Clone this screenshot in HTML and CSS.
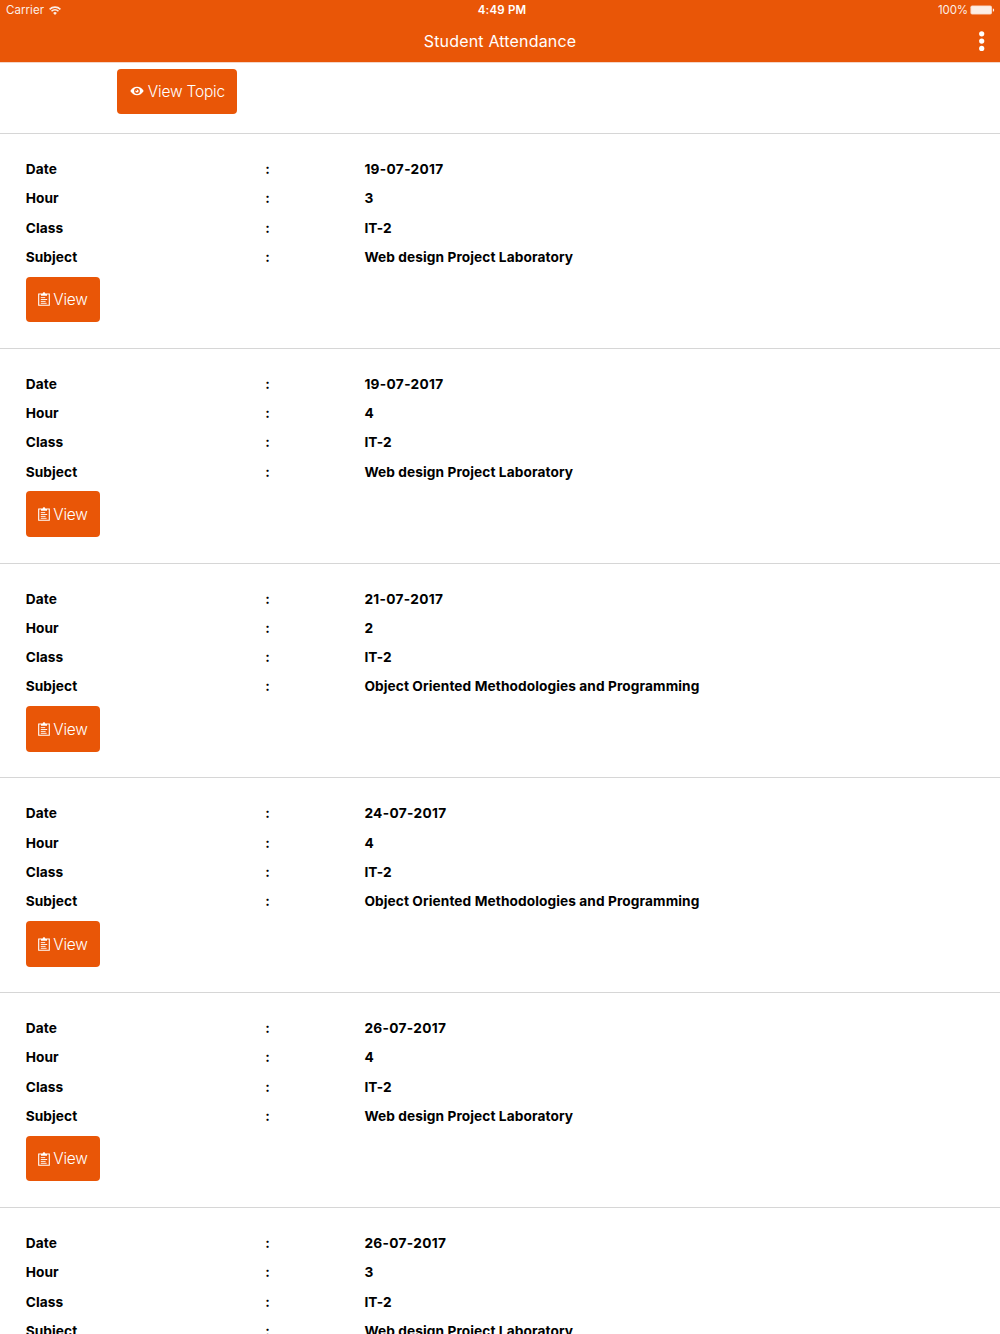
FILE: index.html
```html
<!DOCTYPE html>
<html lang="en">
<head>
<meta charset="utf-8">
<title>Student Attendance</title>
<link rel="stylesheet" href="styles.css">
</head>
<body>
<svg class="defs" aria-hidden="true">
  <symbol id="clipboard" viewBox="0 0 12 14">
    <path d="M3 2H.7v11.300h10.600V2H9" fill="none" stroke="currentColor" stroke-width="1.100"/>
    <path d="M3 3.800V1.600h1.700a1.300 1.300 0 0 1 2.600 0H9v2.200z" fill="currentColor"/>
    <path d="M2.800 5.600h4.400M2.800 7.500h6.400M2.800 9.400h4.800M2.800 11.300h5.800" fill="none" stroke="currentColor" stroke-width=".9"/>
  </symbol>
</svg>
<header class="header">
  <div class="status">
    <div class="carrier">Carrier
      <svg class="wifi" viewBox="0 0 12 9"><path d="M.6 3.300a7.800 7.800 0 0 1 10.800 0M2.500 5.300a5 5 0 0 1 7 0" fill="none" stroke="#fff" stroke-width="1.600"/><path d="M6 8.900 4.100 6.900a2.800 2.800 0 0 1 3.800 0z" fill="#fff"/></svg>
    </div>
    <div class="time">4:49 PM</div>
    <div class="power">100%
      <svg class="battery" viewBox="0 0 25 10"><rect x=".4" y=".4" width="21.600" height="9.200" rx="1.800" fill="#fff" fill-opacity=".8"/><rect x="1.300" y="1.300" width="19.800" height="7.400" rx="1" fill="#fff"/><path d="M22.800 3.200q1.400.4 1.400 1.800t-1.400 1.800z" fill="#fff"/></svg>
    </div>
  </div>
  <div class="navbar">
    <h1 class="title">Student Attendance</h1>
    <svg class="more" viewBox="0 0 6 20"><circle cx="2.700" cy="2.800" r="2.600"/><circle cx="2.700" cy="10.100" r="2.600"/><circle cx="2.700" cy="17.400" r="2.600"/></svg>
  </div>
</header>
<main>
  <div class="toolbar">
    <button class="button topic"><svg class="eye" viewBox="0 0 14 10"><path d="M.3 5Q3 .8 7 .8T13.700 5Q11 9.200 7 9.200T.3 5z" fill="#fff"/><circle cx="7" cy="5" r="2.900" fill="#e95607"/><circle cx="7" cy="5" r="1.600" fill="#fff"/><circle cx="6.300" cy="4.300" r=".8" fill="#e95607"/></svg><span>View Topic</span></button>
  </div>
  <section class="record">
    <dl class="fields">
      <dt>Date</dt><dd>:</dd><dd class="date">19-07-2017</dd>
      <dt>Hour</dt><dd>:</dd><dd>3</dd>
      <dt>Class</dt><dd>:</dd><dd>IT-2</dd>
      <dt>Subject</dt><dd>:</dd><dd>Web design Project Laboratory</dd>
    </dl>
    <button class="button view"><svg class="clip"><use href="#clipboard"/></svg><span>View</span></button>
  </section>
  <section class="record">
    <dl class="fields">
      <dt>Date</dt><dd>:</dd><dd class="date">19-07-2017</dd>
      <dt>Hour</dt><dd>:</dd><dd>4</dd>
      <dt>Class</dt><dd>:</dd><dd>IT-2</dd>
      <dt>Subject</dt><dd>:</dd><dd>Web design Project Laboratory</dd>
    </dl>
    <button class="button view"><svg class="clip"><use href="#clipboard"/></svg><span>View</span></button>
  </section>
  <section class="record">
    <dl class="fields">
      <dt>Date</dt><dd>:</dd><dd class="date">21-07-2017</dd>
      <dt>Hour</dt><dd>:</dd><dd>2</dd>
      <dt>Class</dt><dd>:</dd><dd>IT-2</dd>
      <dt>Subject</dt><dd>:</dd><dd>Object Oriented Methodologies and Programming</dd>
    </dl>
    <button class="button view"><svg class="clip"><use href="#clipboard"/></svg><span>View</span></button>
  </section>
  <section class="record">
    <dl class="fields">
      <dt>Date</dt><dd>:</dd><dd class="date">24-07-2017</dd>
      <dt>Hour</dt><dd>:</dd><dd>4</dd>
      <dt>Class</dt><dd>:</dd><dd>IT-2</dd>
      <dt>Subject</dt><dd>:</dd><dd>Object Oriented Methodologies and Programming</dd>
    </dl>
    <button class="button view"><svg class="clip"><use href="#clipboard"/></svg><span>View</span></button>
  </section>
  <section class="record">
    <dl class="fields">
      <dt>Date</dt><dd>:</dd><dd class="date">26-07-2017</dd>
      <dt>Hour</dt><dd>:</dd><dd>4</dd>
      <dt>Class</dt><dd>:</dd><dd>IT-2</dd>
      <dt>Subject</dt><dd>:</dd><dd>Web design Project Laboratory</dd>
    </dl>
    <button class="button view"><svg class="clip"><use href="#clipboard"/></svg><span>View</span></button>
  </section>
  <section class="record">
    <dl class="fields">
      <dt>Date</dt><dd>:</dd><dd class="date">26-07-2017</dd>
      <dt>Hour</dt><dd>:</dd><dd>3</dd>
      <dt>Class</dt><dd>:</dd><dd>IT-2</dd>
      <dt>Subject</dt><dd>:</dd><dd>Web design Project Laboratory</dd>
    </dl>
  </section>
</main>
</body>
</html>
```

FILE: styles.css
```css
* { box-sizing: border-box; }
body {
  margin: 0;
  height: 1334px;
  overflow: hidden;
  background: #fff;
  color: #000;
  font-family: Inter, "Liberation Sans", sans-serif;
}
.defs { display: block; width: 0; height: 0; }
.header { height: 62px; background: #e95607; color: #fff; box-shadow: 0 1px 0 #f3d6c8; }
.status {
  display: grid;
  grid-template-columns: 1fr auto 1fr;
  height: 20px;
  padding: 0 5px 0 6px;
  align-items: center;
  font-size: 11.500px;
  line-height: 21px;
}
.carrier, .power { display: flex; align-items: center; gap: 5px; opacity: .9; }
.carrier { letter-spacing: .06px; }
.power { justify-content: flex-end; gap: 2px; letter-spacing: -.1px; }
.time { font-weight: 600; letter-spacing: .2px; padding-left: 3px; }
.wifi { width: 12px; height: 9px; }
.battery { width: 25px; height: 10px; margin-bottom: 1px; }
.navbar {
  display: grid;
  grid-template-columns: 1fr auto 1fr;
  align-items: center;
  height: 42px;
  padding-right: 15px;
}
.title { grid-column: 2; margin: 0 0 0 15px; font-size: 16px; line-height: 42px; font-weight: 400; letter-spacing: .17px; }
.more { justify-self: end; width: 6px; height: 20px; fill: #fff; }
.toolbar { height: 71px; padding: 6.600px 0 0 117.300px; }
.button {
  display: flex;
  align-items: center;
  height: 45.600px;
  padding: 0 12.500px;
  border: 0;
  border-radius: 4px;
  background: #e95607;
  color: #fff;
  font: 300 15.500px/46px Inter, "Liberation Sans", sans-serif;
  letter-spacing: -.2px;
}
.topic { width: 120.200px; gap: 4px; }
.view { width: 74px; gap: 3.600px; margin-top: 4.400px; padding: 0 11.900px; }
.eye { flex: none; width: 14px; height: 10px; }
.clip { flex: none; width: 12px; height: 14px; }
.button span { white-space: nowrap; padding-top: 1.600px; }
.record { height: 214.800px; padding: 21px 25.700px 0; border-top: 1px solid #d6d6d6; }
.record:last-child { height: 130px; overflow: hidden; }
.fields {
  display: grid;
  grid-template-columns: 239.500px 99.200px 1fr;
  grid-auto-rows: 29.300px;
  margin: 0;
  font-size: 13.700px;
  line-height: 29.600px;
  font-weight: 650;
  letter-spacing: .09px;
}
.fields dd { margin: 0; }
.fields .date { letter-spacing: .33px; }
```
